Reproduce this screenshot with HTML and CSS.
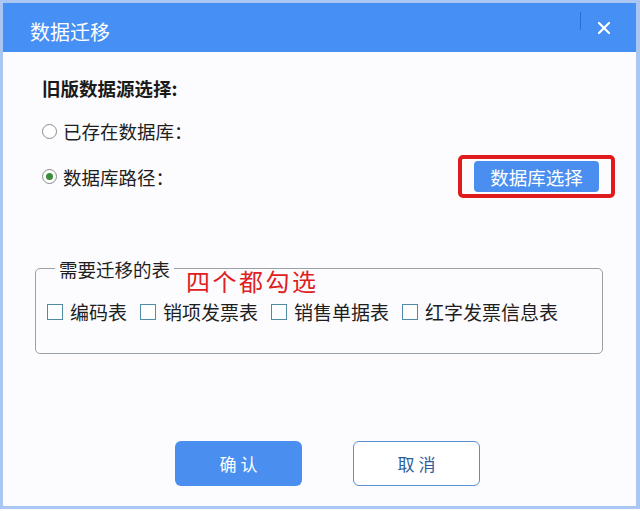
FILE: index.html
```html
<!DOCTYPE html>
<html lang="zh-CN">
<head>
    <meta charset="UTF-8">
    <title>数据迁移</title>
    <link rel="stylesheet" href="styles.css">
</head>
<body>
    <div class="dialog">
        <div class="titlebar">
            <span class="title">数据迁移</span>
            <span class="divider"></span>
            <span class="close">
                <svg width="14" height="14" viewBox="0 0 14 14"><path d="M2 2 L12 12 M12 2 L2 12" stroke="#fff" stroke-width="2.2" stroke-linecap="round"/></svg>
            </span>
        </div>

        <div class="content">
            <div class="section-title">旧版数据源选择:</div>

            <div class="option">
                <span class="radio"></span>
                <span>已存在数据库：</span>
            </div>

            <div class="option path-row">
                <span class="radio checked"></span>
                <span>数据库路径：</span>
                <div class="highlight">
                    <button class="pick-btn">数据库选择</button>
                </div>
            </div>

            <div class="group">
                <div class="legend">需要迁移的表</div>
                <div class="note">四个都勾选</div>
                <div class="checks">
                    <label class="check"><span class="box"></span>编码表</label>
                    <label class="check"><span class="box"></span>销项发票表</label>
                    <label class="check"><span class="box"></span>销售单据表</label>
                    <label class="check"><span class="box"></span>红字发票信息表</label>
                </div>
            </div>

            <div class="footer">
                <button class="button primary">确 认</button>
                <button class="button outline">取 消</button>
            </div>
        </div>
    </div>
</body>
</html>
```

FILE: styles.css
```css
* {
    margin: 0;
    padding: 0;
    box-sizing: border-box;
}

body {
    font-family: "Noto Sans CJK SC", "Noto Sans", sans-serif;
    background: #fcfcfe;
    width: 640px;
    height: 511px;
    overflow: hidden;
}

.dialog {
    width: 640px;
    height: 509px;
    background: #fcfcfe;
    border: 3px solid #a9c7f2;
    border-right-width: 4px;
}

.titlebar {
    height: 49px;
    background: #468ff4;
    display: flex;
    align-items: center;
    padding: 7px 0 0 27px;
    position: relative;
}

.title {
    color: #fff;
    font-size: 20px;
    flex: 1;
}

.divider {
    position: absolute;
    left: 577px;
    top: 9px;
    width: 1px;
    height: 18px;
    background: #2c6ed0;
}

.close {
    position: absolute;
    left: 594px;
    top: 18px;
    display: flex;
}

.content {
    padding: 23px 0 0 32px;
}

.section-title {
    font-size: 18.5px;
    font-weight: bold;
    color: #1a1a1a;
    line-height: 26px;
    padding-left: 7px;
}

.option {
    display: flex;
    align-items: center;
    font-size: 18.5px;
    color: #1e1e1e;
    margin-top: 16px;
    height: 28px;
    padding-left: 7px;
}

.path-row {
    margin-top: 10px;
    height: 43px;
}

.radio {
    width: 15px;
    height: 15px;
    border: 1px solid #8b8b8b;
    border-radius: 50%;
    background: #fff;
    margin-right: 6px;
    display: flex;
    align-items: center;
    justify-content: center;
}

.radio.checked::after {
    content: "";
    width: 7px;
    height: 7px;
    border-radius: 50%;
    background: #3c8c3a;
}

.highlight {
    margin-left: auto;
    margin-right: 21px;
    border: 4px solid #e01b1b;
    border-radius: 5px;
    padding: 2px 12px;
}

.pick-btn {
    font-family: inherit;
    width: 125px;
    height: 31px;
    border: none;
    border-radius: 4px;
    background: #4a8ff0;
    color: #fff;
    font-size: 18.5px;
    display: block;
}

.group {
    position: relative;
    width: 568px;
    height: 86px;
    margin-top: 70px;
    border: 1.5px solid #9aa0a8;
    border-radius: 5px;
}

.legend {
    position: absolute;
    top: -13px;
    left: 19px;
    padding: 0 4px;
    background: #fcfcfe;
    font-size: 18.5px;
    color: #1e1e1e;
    line-height: 26px;
}

.note {
    position: absolute;
    top: -2px;
    left: 150px;
    font-size: 24px;
    letter-spacing: 2.5px;
    color: #e0201e;
    line-height: 28px;
}

.checks {
    display: flex;
    padding: 29px 0 0 11px;
    gap: 13px;
}

.check {
    display: flex;
    align-items: center;
    font-size: 19px;
    line-height: 27px;
    color: #1e1e1e;
}

.box {
    width: 16px;
    height: 16px;
    border: 1.5px solid #4f8ba8;
    background: #fff;
    margin-right: 7px;
}

.footer {
    display: flex;
    gap: 51px;
    padding-left: 140px;
    margin-top: 87px;
}

.button {
    font-family: inherit;
    width: 127px;
    height: 45px;
    border-radius: 6px;
    font-size: 17px;
    cursor: pointer;
}

.button.primary {
    background: #4a8ff0;
    color: #fff;
    border: none;
}

.button.outline {
    background: #fff;
    color: #2c5d9a;
    border: 1.5px solid #5a8fd0;
}
```
